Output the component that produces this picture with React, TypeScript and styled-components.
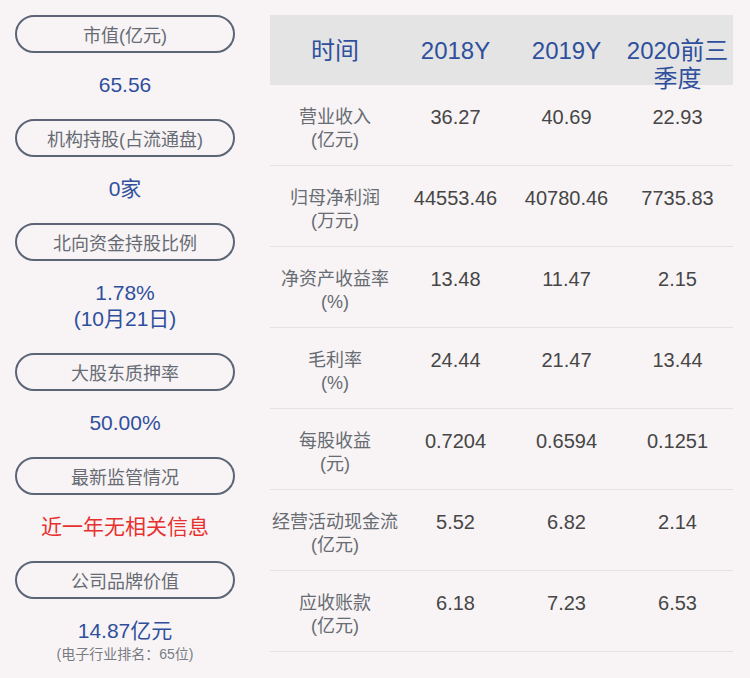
import React from "react";
import styled, { createGlobalStyle } from "styled-components";

const GlobalStyle = createGlobalStyle`
  html, body {
    margin: 0;
    padding: 0;
    background: #f8f4f5;
  }
  body {
    font-family: "Liberation Sans", "Noto Sans CJK SC", sans-serif;
  }
`;

const Page = styled.div`
  width: 750px;
  height: 678px;
  box-sizing: border-box;
  padding: 15px 17px 0 15px;
  display: flex;
  align-items: flex-start;
  gap: 35px;
  background: #f8f4f5;
  overflow: hidden;
`;

const Side = styled.div`
  width: 220px;
  display: flex;
  flex-direction: column;
`;

const Pill = styled.div`
  height: 38px;
  flex: none;
  box-sizing: border-box;
  border: 2px solid #5b6576;
  border-radius: 19px;
  display: flex;
  align-items: center;
  justify-content: center;
  font-size: 18px;
  color: #666b74;
`;

const Value = styled.div<{ $red?: boolean }>`
  padding: 20px 0;
  text-align: center;
  font-size: 21px;
  color: ${(p) => (p.$red ? "#e7302f" : "#2f4f9d")};
`;

const ValueLine = styled.div`
  height: 26px;
  line-height: 24px;
  padding-bottom: 2px;
  box-sizing: border-box;
`;

const SubNote = styled.div`
  height: 20px;
  font-size: 14px;
  line-height: 18px;
  padding-bottom: 2px;
  box-sizing: border-box;
  color: #787c84;
`;

const Table = styled.div`
  width: 463px;
  display: grid;
  grid-template-columns: 130px repeat(3, 111px);
  grid-auto-rows: auto;
  align-content: start;
`;

const HeadCell = styled.div`
  height: 70px;
  box-sizing: border-box;
  padding-top: 22px;
  background: #e4e4e4;
  text-align: center;
  font-size: 24px;
  line-height: 28px;
  color: #2f4f9d;
  overflow: visible;
  position: relative;
`;

const Cell = styled.div<{ $label?: boolean }>`
  height: 81px;
  box-sizing: border-box;
  padding-top: 21px;
  border-bottom: 1px solid #e3e1e2;
  text-align: center;
  font-size: ${(p) => (p.$label ? "18px" : "20px")};
  color: ${(p) => (p.$label ? "#676b72" : "#464646")};
  white-space: nowrap;
`;

const CellLine = styled.div`
  height: 23px;
  line-height: 23px;
`;

const sideItems: { label: string; values: string[]; red?: boolean; note?: string }[] = [
  { label: "市值(亿元)", values: ["65.56"] },
  { label: "机构持股(占流通盘)", values: ["0家"] },
  { label: "北向资金持股比例", values: ["1.78%", "(10月21日)"] },
  { label: "大股东质押率", values: ["50.00%"] },
  { label: "最新监管情况", values: ["近一年无相关信息"], red: true },
  { label: "公司品牌价值", values: ["14.87亿元"], note: "(电子行业排名：65位)" },
];

const headers = ["时间", "2018Y", "2019Y", "2020前三季度"];

const rows: { name: string; unit: string; vals: string[] }[] = [
  { name: "营业收入", unit: "(亿元)", vals: ["36.27", "40.69", "22.93"] },
  { name: "归母净利润", unit: "(万元)", vals: ["44553.46", "40780.46", "7735.83"] },
  { name: "净资产收益率", unit: "(%)", vals: ["13.48", "11.47", "2.15"] },
  { name: "毛利率", unit: "(%)", vals: ["24.44", "21.47", "13.44"] },
  { name: "每股收益", unit: "(元)", vals: ["0.7204", "0.6594", "0.1251"] },
  { name: "经营活动现金流", unit: "(亿元)", vals: ["5.52", "6.82", "2.14"] },
  { name: "应收账款", unit: "(亿元)", vals: ["6.18", "7.23", "6.53"] },
];

export default function App() {
  return (
    <>
      <GlobalStyle />
      <Page>
        <Side>
          {sideItems.map((item) => (
            <React.Fragment key={item.label}>
              <Pill>{item.label}</Pill>
              <Value $red={item.red}>
                {item.values.map((v) => (
                  <ValueLine key={v}>{v}</ValueLine>
                ))}
                {item.note && <SubNote>{item.note}</SubNote>}
              </Value>
            </React.Fragment>
          ))}
        </Side>
        <Table>
          {headers.map((h) => (
            <HeadCell key={h}>{h}</HeadCell>
          ))}
          {rows.map((r) => (
            <React.Fragment key={r.name}>
              <Cell $label>
                <CellLine>{r.name}</CellLine>
                <CellLine>{r.unit}</CellLine>
              </Cell>
              {r.vals.map((v, i) => (
                <Cell key={i}>
                  <CellLine>{v}</CellLine>
                </Cell>
              ))}
            </React.Fragment>
          ))}
        </Table>
      </Page>
    </>
  );
}
